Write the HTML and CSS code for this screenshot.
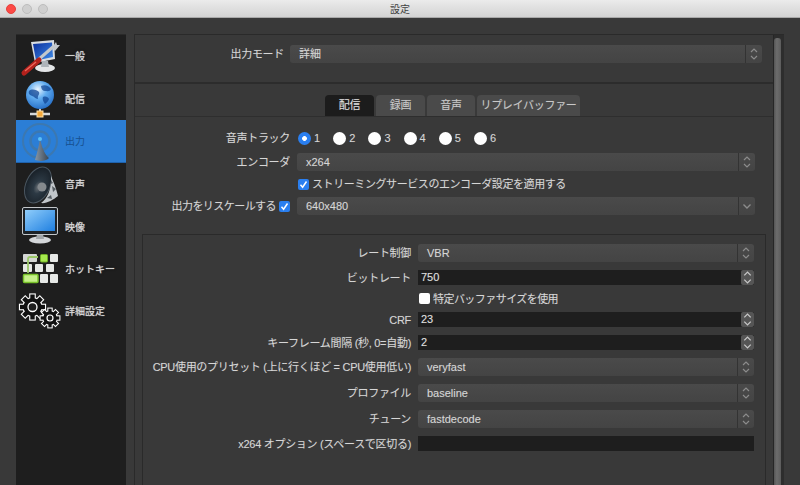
FILE: index.html
```html
<!DOCTYPE html>
<html lang="ja">
<head>
<meta charset="utf-8">
<title>設定</title>
<link rel="stylesheet" href="styles.css">
</head>
<body>
<svg class="defs" aria-hidden="true">
  <defs>
    <symbol id="updown" viewBox="0 0 10 14"><path d="M2 5 5 2 8 5M2 9 5 12 8 9" fill="none" stroke="currentColor" stroke-width="1.2"/></symbol>
    <symbol id="down" viewBox="0 0 10 14"><path d="M1.5 5.5 5 9 8.500 5.500" fill="none" stroke="currentColor" stroke-width="1.4"/></symbol>
    <symbol id="tick" viewBox="0 0 11 11"><path d="M2.500 5.800 4.600 8.200 8.500 2.500" fill="none" stroke="#fff" stroke-width="1.500"/></symbol>
    <g id="gear"><circle r="9"/><rect x="-2.200" y="-12.500" width="4.400" height="25"/><rect x="-2.200" y="-12.500" width="4.400" height="25" transform="rotate(45)"/><rect x="-2.200" y="-12.500" width="4.400" height="25" transform="rotate(90)"/><rect x="-2.200" y="-12.500" width="4.400" height="25" transform="rotate(135)"/></g>
    <linearGradient id="scr1" x1="0" y1="0" x2="1" y2="1"><stop offset="0" stop-color="#0b2f9c"/><stop offset="1" stop-color="#3f8be8"/></linearGradient>
    <radialGradient id="globe" cx=".42" cy=".3" r=".8"><stop offset="0" stop-color="#eaf5ff"/><stop offset=".4" stop-color="#62adf0"/><stop offset="1" stop-color="#1a63c0"/></radialGradient>
    <linearGradient id="scr2" x1="0" y1="0" x2="1" y2="1"><stop offset="0" stop-color="#8fcdfb"/><stop offset="1" stop-color="#1f7fe0"/></linearGradient>
    <linearGradient id="cone" x1="0" y1="0" x2="1" y2="0"><stop offset="0" stop-color="#8796a6"/><stop offset="1" stop-color="#3a4652"/></linearGradient>
    <radialGradient id="horn" cx=".55" cy=".55" r=".6"><stop offset="0" stop-color="#6d7378"/><stop offset=".3" stop-color="#2c3944"/><stop offset="1" stop-color="#161d24"/></radialGradient>
  </defs>
</svg>
<header class="titlebar">
  <div class="lights"><span class="light light-close"></span><span class="light"></span><span class="light"></span></div>
  <div class="title">設定</div>
</header>
<div class="window">
  <nav class="sidebar">
    <div class="nav-item">
      <svg class="nav-icon" viewBox="0 0 49 43">
        <path d="M15 7 38 5 39 24 19 28Z" fill="#d9dde2"/><path d="M17 9 36 7.500 37 22 20 25.500Z" fill="url(#scr1)"/>
        <ellipse cx="29" cy="33" rx="10" ry="4" fill="#e4e6e8"/><path d="M26 26h6l1 6h-8z" fill="#aeb4ba"/>
        <path d="M22 25 38 11" stroke="#c4c8cc" stroke-width="3"/><path d="M36 13l4-6 1 3 3 0-5 6z" fill="#c4c8cc"/>
        <path d="M8 38 23 25" stroke="#b3211c" stroke-width="5" stroke-linecap="round"/><path d="M9 36 20 27" stroke="#ee6a5f" stroke-width="1.200"/>
      </svg>
      <span class="nav-label">一般</span>
    </div>
    <div class="nav-item">
      <svg class="nav-icon" viewBox="0 0 49 43">
        <path d="M14 37H34" stroke="#d5d8da" stroke-width="2.500"/><path d="M24 30V36" stroke="#c9cdd0" stroke-width="2"/>
        <rect x="21" y="34" width="6" height="6" fill="#f6a93a" stroke="#fbe0a8"/>
        <circle cx="24" cy="18" r="14" fill="url(#globe)"/>
        <path d="M13 14c3-3 8-1 10 1 1 3-2 3-1 7-3 0-4-3-6-3-2-1-4-2-3-5zM25 9c4-2 8 0 10 3-1 3-4 2-6 2-2 0-4-2-4-5zM27 20c3-1 5 0 6 2-1 3-3 4-4 5-1-2-3-4-2-7z" fill="#0c3f8f" opacity=".7"/>
      </svg>
      <span class="nav-label">配信</span>
    </div>
    <div class="nav-item nav-item-active">
      <svg class="nav-icon" viewBox="0 0 49 43">
        <circle cx="24" cy="21" r="17" fill="none" stroke="#3c78b0" stroke-width="2"/>
        <circle cx="24" cy="21" r="9.500" fill="none" stroke="#3c78b0" stroke-width="2.500"/>
        <path d="M24 19C26 28 29 35 33 38 29 42 22 41 19 40 21 33 23 26 24 19Z" fill="url(#cone)"/>
        <circle cx="24" cy="19" r="2" fill="#5cc0f5"/>
      </svg>
      <span class="nav-label">出力</span>
    </div>
    <div class="nav-item">
      <svg class="nav-icon" viewBox="0 0 49 43">
        <ellipse cx="22" cy="22" rx="12" ry="19" transform="rotate(25 22 22)" fill="url(#horn)" stroke="#4a5660"/>
        <circle cx="26" cy="24" r="4.500" fill="#84898d"/>
        <path d="M35 13C38 20 41 28 42 33 37 37 30 41 25 40 31 36 36 26 35 13Z" fill="#c2c7cb"/>
        <path d="M36 23l4 3-3 3zM31 35l4-3 1 4zM35 17l2 3-2 1z" fill="#565d63"/>
      </svg>
      <span class="nav-label">音声</span>
    </div>
    <div class="nav-item">
      <svg class="nav-icon" viewBox="0 0 49 43">
        <ellipse cx="24" cy="34" rx="11" ry="3.500" fill="#d4d7da"/><path d="M21 28h6l1 5h-8z" fill="#a2a7ab"/>
        <rect x="6.500" y="1.500" width="35" height="27" rx="1.500" fill="#1c2228" stroke="#c2c6ca"/>
        <rect x="9" y="4" width="30" height="21" fill="url(#scr2)"/>
      </svg>
      <span class="nav-label">映像</span>
    </div>
    <div class="nav-item">
      <svg class="nav-icon" viewBox="0 0 49 43">
        <g fill="#e6e8e6">
          <rect x="7" y="5" width="14" height="8" rx="1" fill="#d4d6d4"/><rect x="34" y="5" width="8" height="8" rx="1"/>
          <rect x="7" y="15" width="9" height="8" rx="1"/><rect x="19" y="15" width="8" height="8" rx="1"/><rect x="30" y="15" width="8" height="8" rx="1"/>
          <rect x="24" y="25" width="8" height="9" rx="1"/><rect x="34" y="25" width="8" height="9" rx="1"/>
        </g>
        <rect x="24.500" y="5.500" width="7" height="7.500" rx="1" fill="#a6e84e" stroke="#6fae24"/>
        <rect x="7.500" y="25.500" width="14.500" height="8" rx="1" fill="#c6f08a" stroke="#78c22a" stroke-width="1.500"/>
        <path d="M12 24V10Q12 8 14 8H22" fill="none" stroke="#9bc76a" stroke-width="1.800"/>
      </svg>
      <span class="nav-label">ホットキー</span>
    </div>
    <div class="nav-item">
      <svg class="nav-icon" viewBox="0 0 49 43">
        <use href="#gear" transform="translate(16.500 15)" fill="#fff" stroke="#fff" stroke-width="2.200"/>
        <use href="#gear" transform="translate(16.500 15)" fill="#111"/>
        <circle cx="16.500" cy="15" r="4.500" fill="#1e1e1e" stroke="#fff" stroke-width="1.300"/>
        <use href="#gear" transform="translate(34 26) scale(.75)" fill="#fff" stroke="#fff" stroke-width="2.800"/>
        <use href="#gear" transform="translate(34 26) scale(.75)" fill="#111"/>
        <circle cx="34" cy="26" r="3" fill="#1e1e1e" stroke="#fff" stroke-width="1.200"/>
      </svg>
      <span class="nav-label">詳細設定</span>
    </div>
  </nav>
  <main class="frame">
    <div class="scroll">
      <section class="mode-panel">
        <label class="label mode-label">出力モード</label>
        <div class="select mode-select"><span class="select-text">詳細</span><span class="select-btn"><svg class="arrow"><use href="#updown"/></svg></span></div>
      </section>
      <section class="tabs-panel">
        <div class="tabs">
          <span class="tab tab-active">配信</span>
          <span class="tab">録画</span>
          <span class="tab">音声</span>
          <span class="tab tab-wide">リプレイバッファー</span>
        </div>
      </section>
      <section class="stream-form">
        <label class="label">音声トラック</label>
        <div class="radios">
          <span class="radio-item"><span class="radio radio-on"></span>1</span>
          <span class="radio-item"><span class="radio"></span>2</span>
          <span class="radio-item"><span class="radio"></span>3</span>
          <span class="radio-item"><span class="radio"></span>4</span>
          <span class="radio-item"><span class="radio"></span>5</span>
          <span class="radio-item"><span class="radio"></span>6</span>
        </div>
        <label class="label">エンコーダ</label>
        <div class="select"><span class="select-text">x264</span><span class="select-btn"><svg class="arrow"><use href="#updown"/></svg></span></div>
        <span></span>
        <div class="check-row"><span class="check check-on"><svg class="tick"><use href="#tick"/></svg></span><span class="label label-long">ストリーミングサービスのエンコーダ設定を適用する</span></div>
        <div class="label label-check"><span class="label-tight">出力をリスケールする</span><span class="check check-on"><svg class="tick"><use href="#tick"/></svg></span></div>
        <div class="select"><span class="select-text">640x480</span><span class="select-btn"><svg class="arrow"><use href="#down"/></svg></span></div>
      </section>
      <section class="group">
        <label class="label">レート制御</label>
        <div class="select"><span class="select-text">VBR</span><span class="select-btn"><svg class="arrow"><use href="#updown"/></svg></span></div>
        <label class="label">ビットレート</label>
        <div class="input"><span class="input-text">750</span><span class="spin"><svg class="arrow-spin"><use href="#updown"/></svg></span></div>
        <span></span>
        <div class="check-row check-row-small"><span class="check"></span><span class="label label-tight">特定バッファサイズを使用</span></div>
        <label class="label">CRF</label>
        <div class="input"><span class="input-text">23</span><span class="spin"><svg class="arrow-spin"><use href="#updown"/></svg></span></div>
        <label class="label">キーフレーム間隔 (秒, 0=自動)</label>
        <div class="input"><span class="input-text">2</span><span class="spin"><svg class="arrow-spin"><use href="#updown"/></svg></span></div>
        <label class="label">CPU使用のプリセット (上に行くほど = CPU使用低い)</label>
        <div class="select"><span class="select-text">veryfast</span><span class="select-btn"><svg class="arrow"><use href="#updown"/></svg></span></div>
        <label class="label">プロファイル</label>
        <div class="select"><span class="select-text">baseline</span><span class="select-btn"><svg class="arrow"><use href="#updown"/></svg></span></div>
        <label class="label">チューン</label>
        <div class="select"><span class="select-text">fastdecode</span><span class="select-btn"><svg class="arrow"><use href="#updown"/></svg></span></div>
        <label class="label">x264 オプション (スペースで区切る)</label>
        <div class="input"></div>
      </section>
    </div>
    <div class="scrollbar"><div class="thumb"></div></div>
  </main>
</div>
</body>
</html>
```
FILE: styles.css
```css
* { box-sizing: border-box; }
html, body { margin: 0; height: 100%; }
body {
  display: flex;
  flex-direction: column;
  height: 485px;
  overflow: hidden;
  background: #393939;
  color: #d6d6d6;
  font: 11px/14px "Liberation Sans", "Noto Sans CJK JP", sans-serif;
  text-shadow: 0 0 1px rgba(255, 255, 255, .22);
}
.defs { position: absolute; width: 0; height: 0; }

.titlebar {
  position: relative;
  flex: none;
  display: flex;
  align-items: center;
  justify-content: center;
  height: 18px;
  padding-top: 2px;
  background: linear-gradient(#ebebeb, #d3d3d3);
  border-bottom: 1px solid #a9a9a9;
  text-shadow: none;
}
.lights { position: absolute; left: 6px; top: 4px; display: flex; gap: 6px; }
.light { width: 10px; height: 10px; border-radius: 50%; background: #cfcfcf; border: 1px solid #bdbdbd; }
.light-close { background: #fc4a46; border-color: #e5403c; }
.title { font-size: 10px; color: #404040; }

.window { flex: 1; min-height: 0; display: flex; gap: 8px; padding: 16px 16px 0; }

.sidebar { flex: none; width: 110px; background: #1e1e1e; border-top: 1px solid #2a2a2a; }
.nav-item { display: flex; align-items: center; height: 43px; color: #d8d8d8; font-size: 10px; }
.nav-item:first-child { height: 42px; }
.nav-icon { flex: none; width: 49px; height: 43px; }
.nav-label { text-shadow: 0 0 1px #ddd, 0 0 3px #000; }
.nav-item:nth-child(-n+3) .nav-label { padding-top: 2px; }
.nav-item:nth-child(n+6) .nav-label { padding-bottom: 2px; }
.nav-item:nth-child(7) .nav-label { padding-bottom: 3px; }
.nav-item-active { background: #2b7ed6; border-bottom: 1px solid #1f62ac; color: #17508f; }
.nav-item-active .nav-label { text-shadow: none; }

.frame { flex: 1; min-width: 0; display: flex; border: 1px solid #2a2a2a; border-bottom: 0; }
.scroll { flex: none; width: 638px; }
.scrollbar { flex: none; width: 11px; padding-top: 3px; background: #2d2d2d; border-left: 1px solid #262626; }
.thumb { width: 7px; height: 100%; background: linear-gradient(90deg, #555, #6c6c6c 40%, #5c5c5c); border-radius: 3px 3px 0 0; }

.label { color: #d6d6d6; text-align: right; white-space: nowrap; letter-spacing: -.3px; }
.label-tight { letter-spacing: -.55px; }
.label-long { letter-spacing: -.42px; }

.mode-panel { display: flex; align-items: center; gap: 6px; height: 49px; padding: 0 10px 10px 0; border-bottom: 2px solid #2c2c2c; }
.mode-label { width: 149px; }
.mode-select { flex: none; width: 472px; }

.tabs-panel { height: 33px; padding-top: 11px; padding-left: 190px; border-bottom: 1px solid #2e2e2e; }
.tabs { display: flex; gap: 2px; }
.tab { width: 49px; height: 21px; line-height: 21px; text-align: center; border-radius: 4px 4px 0 0; background: #4a4a4a; color: #c8c8c8; letter-spacing: -.3px; }
.tab:nth-child(3) { width: 48px; }
.tab-active { background: #1c1c1c; color: #e0e0e0; }
.tab-wide { width: 103px; }

.stream-form { display: grid; grid-template-columns: 155px 458px; column-gap: 7px; row-gap: 8px; align-items: center; padding-top: 14px; }
.radios { display: flex; height: 13px; align-items: center; gap: 12px; padding-left: 1px; }
.radio-item { display: flex; align-items: center; gap: 3px; width: 23.200px; font-size: 11px; }
.radio { flex: none; width: 13px; height: 13px; border-radius: 50%; background: #fff; }
.radio-on { background: radial-gradient(circle, #fff 0 2px, #2a7ff0 2.800px); }

.select { display: flex; height: 18px; background: linear-gradient(#4a4a4a, #444); border-radius: 3px; color: #d6d6d6; }
.select-text { flex: 1; padding-left: 9px; line-height: 18px; }
.select-btn { flex: none; width: 17px; display: flex; align-items: center; justify-content: center; border-left: 1px solid #333; color: #8c8c8c; }
.arrow { width: 10px; height: 14px; }

.check-row { display: flex; align-items: center; gap: 3px; height: 10px; padding-left: 1px; }
.check { flex: none; display: block; width: 11px; height: 11px; border-radius: 2px; background: #fff; }
.check-on { background: #2a7ff0; }
.tick { display: block; width: 11px; height: 11px; }
.label-check { display: flex; justify-content: flex-end; align-items: center; gap: 3px; }
.check-row-small { height: 11px; gap: 3px; }

.group { display: grid; grid-template-columns: 268px 336px; column-gap: 7px; row-gap: 8px; align-items: center; margin: 19px 7px 0; height: 251px; align-content: start; padding-top: 9px; border: 1px solid #2a2a2a; border-bottom: 0; }

.input { display: flex; height: 15px; background: #1e1e1e; }
.input-text { flex: 1; padding-left: 3px; line-height: 15px; color: #e0e0e0; }
.spin { flex: none; width: 13px; display: flex; align-items: center; justify-content: center; background: #555; border-radius: 2px; color: #c8c8c8; }
.arrow-spin { width: 11px; height: 15px; }
```
